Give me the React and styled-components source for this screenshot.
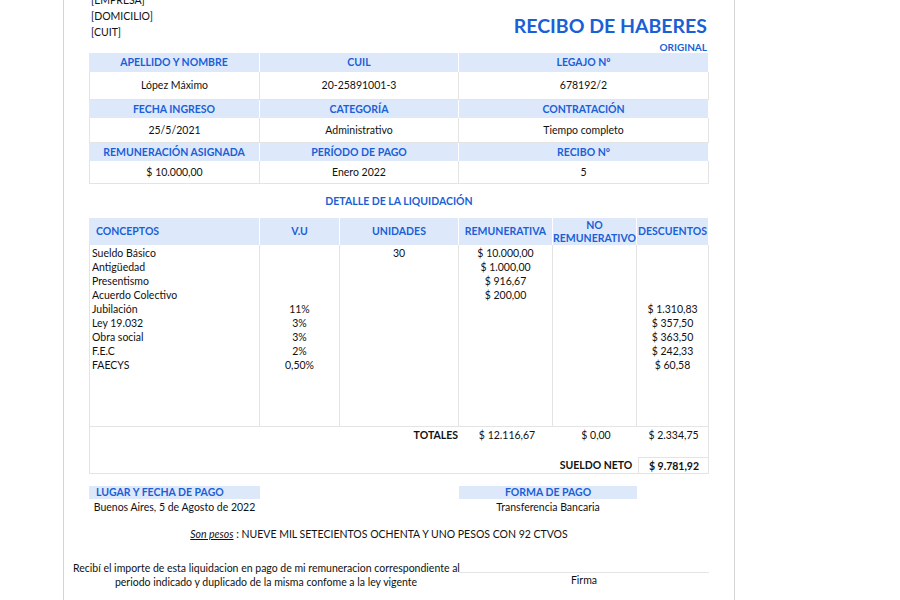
import React from "react";
import styled, { createGlobalStyle } from "styled-components";

const G = createGlobalStyle`
  body { margin: 0; background: #fff; font-family: Lato, "Open Sans", sans-serif; font-size: 10.5px; color: #111; overflow: hidden; }
`;
const BLUE = "#1b5fd6";
const HBG = "#dde9fb";
const LINE = "#e4e4e4";

const Sheet = styled.div`
  margin-left: 63px; width: 620px; height: 620px; padding: 0 25px;
  border-left: 1px solid #d4d4d4; border-right: 1px solid #d4d4d4;
  margin-top: -8px;
`;
const Top = styled.div`display: flex; justify-content: space-between; align-items: flex-start;`;
const Company = styled.div`line-height: 16px; padding-left: 2px;`;
const TitleBox = styled.div`text-align: right; padding-top: 23px; padding-right: 2px;`;
const Title = styled.div`color: ${BLUE}; font-weight: 700; font-size: 19.5px; line-height: 22px;`;
const Sub = styled.div`color: ${BLUE}; font-weight: 700; font-size: 10px; margin-top: 4px;`;

const Info = styled.div`
  display: grid; grid-template-columns: 171px 199px 250px;
`;
const HCell = styled.div`
  background: ${HBG}; color: ${BLUE}; font-weight: 700; text-align: center;
  height: ${p => p.h || 18}px; line-height: ${p => p.h || 18}px; border-right: 1px solid #fff;
`;
const VCell = styled.div`
  text-align: center; height: ${p => p.h}px; line-height: ${p => p.h}px;
  border-right: 1px solid ${LINE}; border-bottom: 1px solid ${LINE};
  &:nth-child(3n+1) { border-left: 1px solid ${LINE}; }
`;
const Section = styled.div`color: ${BLUE}; font-weight: 700; text-align: center; margin: 11px 0 11px;`;

const Detail = styled.div`display: grid; grid-template-columns: 171px 80px 119px 94px 84px 72px;`;
const DH = styled.div`
  background: ${HBG}; color: ${BLUE}; font-weight: 700; height: 27px;
  display: flex; align-items: center; justify-content: ${p => p.left ? "flex-start" : "center"};
  text-align: center; line-height: 13px; padding-left: ${p => p.left ? 7 : 0}px; border-right: 1px solid #fff;
`;
const Col = styled.div`
  height: 180px; padding-top: 1px; line-height: 14px; text-align: ${p => p.left ? "left" : "center"};
  padding-left: ${p => p.left ? 2 : 0}px; border-right: 1px solid ${LINE};
  ${p => p.first && `border-left: 1px solid ${LINE};`} border-bottom: 1px solid ${LINE};
`;
const Tot = styled.div`
  border: 1px solid ${LINE}; border-top: none; display: grid; grid-template-columns: 370px 94px 84px 71px;
  height: 46px; grid-template-rows: 30px 16px;
`;
const TCell = styled.div`
  text-align: ${p => p.right ? "right" : "center"}; font-weight: ${p => p.b ? 700 : 400};
  padding-right: ${p => p.right ? 2 : 0}px; padding-top: 1px; line-height: 14px;
  ${p => p.boxed && `border-top: 1px solid ${LINE}; border-left: 1px solid ${LINE};`}
`;
const Pay = styled.div`display: grid; grid-template-columns: 171px 199px 178px; margin-top: 12px;`;
const PH = styled.div`
  background: ${HBG}; color: ${BLUE}; font-weight: 700; height: 13px; line-height: 13px;
  text-align: ${p => p.left ? "left" : "center"}; padding-left: ${p => p.left ? 7 : 0}px;
`;
const PV = styled.div`text-align: center; line-height: 14px; margin-top: 1px;`;
const Pesos = styled.div`text-align: center; margin: 14px 0 0; padding-right: 40px; u { font-style: italic; }`;
const Bottom = styled.div`display: grid; grid-template-columns: 396px 250px; margin-top: 21px; margin-left: -26px;`;
const Recibi = styled.div`text-align: center; line-height: 14px; white-space: nowrap; padding-left: 10px;`;
const Firma = styled.div`border-top: 1px solid ${LINE}; margin-top: 11px; text-align: center; padding-top: 1px;`;

const rows = [
  ["Sueldo Básico", "", "30", "$ 10.000,00", "", ""],
  ["Antigüedad", "", "", "$ 1.000,00", "", ""],
  ["Presentismo", "", "", "$ 916,67", "", ""],
  ["Acuerdo Colectivo", "", "", "$ 200,00", "", ""],
  ["Jubilación", "11%", "", "", "", "$ 1.310,83"],
  ["Ley 19.032", "3%", "", "", "", "$ 357,50"],
  ["Obra social", "3%", "", "", "", "$ 363,50"],
  ["F.E.C", "2%", "", "", "", "$ 242,33"],
  ["FAECYS", "0,50%", "", "", "", "$ 60,58"],
];

const info = [
  [["APELLIDO Y NOMBRE", "CUIL", "LEGAJO Nº"], ["López Máximo", "20-25891001-3", "678192/2"], 28],
  [["FECHA INGRESO", "CATEGORÍA", "CONTRATACIÓN"], ["25/5/2021", "Administrativo", "Tiempo completo"], 25],
  [["REMUNERACIÓN ASIGNADA", "PERÍODO DE PAGO", "RECIBO Nº"], ["$ 10.000,00", "Enero 2022", "5"], 23],
];

export default function App() {
  return (
    <>
      <G />
      <Sheet>
        <Top>
          <Company>[EMPRESA]<br />[DOMICILIO]<br />[CUIT]</Company>
          <TitleBox><Title>RECIBO DE HABERES</Title><Sub>ORIGINAL</Sub></TitleBox>
        </Top>
        {info.map(([h, v, hh], i) => (
          <Info key={i}>
            {h.map(t => <HCell key={t} h={i === 0 ? 19 : 18}>{t}</HCell>)}
            {v.map(t => <VCell key={t} h={hh - 1}>{t}</VCell>)}
          </Info>
        ))}
        <Section>DETALLE DE LA LIQUIDACIÓN</Section>
        <Detail>
          <DH left>CONCEPTOS</DH><DH>V.U</DH><DH>UNIDADES</DH><DH>REMUNERATIVA</DH><DH>NO<br />REMUNERATIVO</DH><DH>DESCUENTOS</DH>
          {[0, 1, 2, 3, 4, 5].map(c => (
            <Col key={c} left={c === 0} first={c === 0}>
              {rows.map((r, i) => <div key={i}>{r[c] || "\u00a0"}</div>)}
            </Col>
          ))}
        </Detail>
        <Tot>
          <TCell right b>TOTALES</TCell><TCell>$ 12.116,67</TCell><TCell>$ 0,00</TCell><TCell>$ 2.334,75</TCell>
          <div /><div /><TCell b>SUELDO NETO</TCell><TCell b boxed>$ 9.781,92</TCell>
        </Tot>
        <Pay>
          <PH left>LUGAR Y FECHA DE PAGO</PH><div /><PH>FORMA DE PAGO</PH>
          <PV>Buenos Aires, 5 de Agosto de 2022</PV><div /><PV>Transferencia Bancaria</PV>
        </Pay>
        <Pesos><u>Son pesos</u> : NUEVE MIL SETECIENTOS OCHENTA Y UNO PESOS CON 92 CTVOS</Pesos>
        <Bottom>
          <Recibi>Recibí el importe de esta liquidacion en pago de mi remuneracion correspondiente al<br />periodo indicado y duplicado de la misma confome a la ley vigente</Recibi>
          <Firma>Firma</Firma>
        </Bottom>
      </Sheet>
    </>
  );
}
